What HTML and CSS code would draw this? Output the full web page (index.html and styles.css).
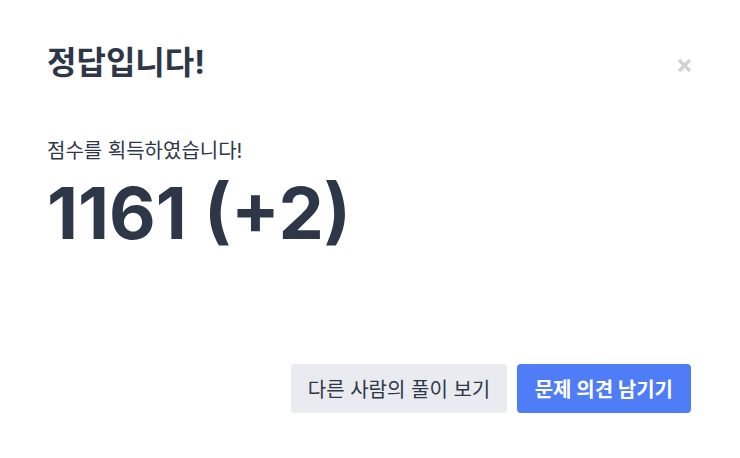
FILE: index.html
```html
<!DOCTYPE html>
<html lang="ko">
<head>
<meta charset="utf-8">
<link rel="stylesheet" href="styles.css">
</head>
<body>
<div class="modal">
  <div class="header">
    <h1 class="title">정답입니다!</h1>
    <button class="close" aria-label="닫기">
      <svg width="15" height="15" viewBox="0 0 15 15"><path d="M2 2L13 13M13 2L2 13" stroke="#d2d2d2" stroke-width="3.2" stroke-linecap="butt"/></svg>
    </button>
  </div>
  <div class="body">
    <p class="label">점수를 획득하였습니다!</p>
    <p class="score">1161 (+2)</p>
  </div>
  <div class="footer">
    <button class="btn btn-gray">다른 사람의 풀이 보기</button>
    <button class="btn btn-blue">문제 의견 남기기</button>
  </div>
</div>
</body>
</html>
```

FILE: styles.css
```css
* { box-sizing: border-box; }
html, body { margin: 0; padding: 0; background: #fff; }
body {
  font-family: Inter, "Noto Sans CJK KR", sans-serif;
  color: #2d3748;
  width: 740px;
  height: 458px;
}
.modal {
  padding: 38px 49px 45px 47px;
  height: 458px;
  display: flex;
  flex-direction: column;
}
.header {
  display: flex;
  justify-content: space-between;
  align-items: center;
}
.title {
  margin: 0;
  font-size: 32px;
  font-weight: 700;
  line-height: 50px;
}
.close {
  border: 0;
  background: none;
  padding: 0;
  margin-right: -3px;
  margin-top: 4px;
  width: 20px;
  height: 20px;
  display: flex;
  align-items: center;
  justify-content: center;
}
.body { margin-top: 49px; }
.label {
  margin: 0;
  font-size: 20px;
  line-height: 28px;
}
.score {
  margin: 8px 0 0;
  font-size: 72px;
  font-weight: 700;
  line-height: 80px;
}
.footer {
  margin-top: auto;
  display: flex;
  justify-content: flex-end;
  gap: 10px;
}
.btn {
  border: 0;
  border-radius: 4px;
  height: 49px;
  padding: 0 18px;
  font-family: Inter, "Noto Sans CJK KR", sans-serif;
  font-size: 20px;
}
.btn-gray { background: #e9ebf0; color: #2d3748; padding: 0 16.5px; }
.btn-blue { background: #4f7cf7; color: #fff; font-weight: 700; }
```
